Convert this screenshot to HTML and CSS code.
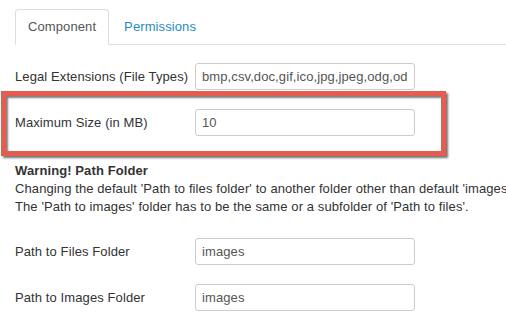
FILE: index.html
```html
<!DOCTYPE html>
<html>
<head>
<meta charset="utf-8">
<link rel="stylesheet" href="styles.css">
</head>
<body>
<div class="page">
  <ul class="tabs">
    <li class="tab active">Component</li>
    <li class="tab link">Permissions</li>
  </ul>
  <div class="row first">
    <label class="label">Legal Extensions (File Types)</label>
    <input class="input" type="text" value="bmp,csv,doc,gif,ico,jpg,jpeg,odg,odp,ods,odt,pdf,png,ppt,txt,xcf,xls">
  </div>
  <div class="row">
    <label class="label">Maximum Size (in MB)</label>
    <input class="input" type="text" value="10">
  </div>
  <div class="warning">
    <div class="warning-title">Warning! Path Folder</div>
    <div class="warning-text">Changing the default 'Path to files folder' to another folder other than default 'images'<br>The 'Path to images' folder has to be the same or a subfolder of 'Path to files'.</div>
  </div>
  <div class="row">
    <label class="label">Path to Files Folder</label>
    <input class="input" type="text" value="images">
  </div>
  <div class="row">
    <label class="label">Path to Images Folder</label>
    <input class="input" type="text" value="images">
  </div>
  <div class="highlight"></div>
</div>
</body>
</html>
```
FILE: styles.css
```css
html, body {
  margin: 0;
  padding: 0;
  background: #fff;
  overflow: hidden;
}
body {
  width: 506px;
  height: 324px;
  font-family: "Liberation Sans", Arial, sans-serif;
  font-size: 13px;
  line-height: 18px;
  letter-spacing: 0.1px;
  color: #333;
}
.page {
  position: relative;
  padding: 9px 0 0 15px;
  height: 315px;
}
.tabs {
  display: flex;
  list-style: none;
  margin: 0;
  padding: 0;
  border-bottom: 1px solid #ddd;
}
.tab {
  padding: 0 12px;
  line-height: 34px;
  border: 1px solid transparent;
  border-radius: 4px 4px 0 0;
  margin-right: 2px;
  margin-bottom: -1px;
}
.tab.active {
  color: #555;
  background: #fff;
  border-color: #ddd #ddd #fff #ddd;
}
.tab.link {
  color: #1e8bc3;
}
.row {
  display: flex;
  align-items: center;
  height: 27px;
  margin-bottom: 19px;
}
.row.first {
  margin-top: 18px;
}
.label {
  width: 180px;
  flex: none;
}
.input {
  box-sizing: border-box;
  width: 220px;
  height: 27px;
  margin: 0;
  padding: 0 6px;
  border: 1px solid #ccc;
  border-radius: 3px;
  font-family: "Liberation Sans", Arial, sans-serif;
  font-size: 13px;
  letter-spacing: 0.1px;
  color: #555;
  background: #fff;
  outline: none;
}
.warning {
  margin-top: 26px;
  margin-bottom: 22px;
  white-space: nowrap;
}
.warning-title {
  font-weight: bold;
}
.highlight {
  position: absolute;
  left: 1px;
  top: 91px;
  width: 445px;
  height: 65px;
  box-sizing: border-box;
  border: 5px solid #e45d50;
  box-shadow: 2px 2px 2px rgba(0, 0, 0, 0.55), inset 2px 2px 2px rgba(0, 0, 0, 0.5);
  pointer-events: none;
}
```
